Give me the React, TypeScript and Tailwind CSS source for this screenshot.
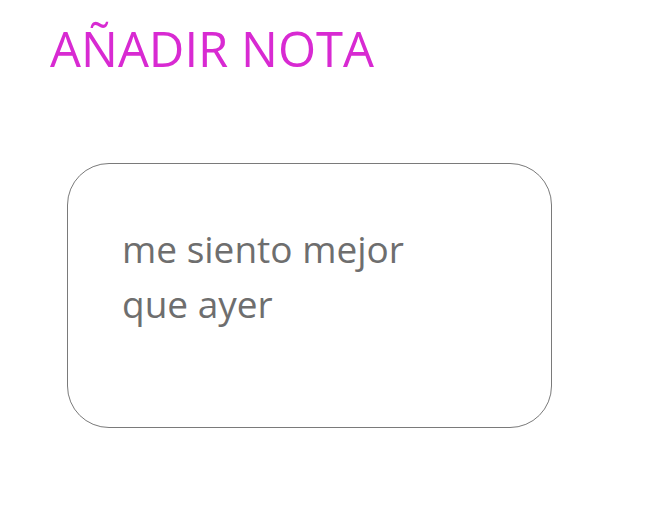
export default function App() {
  return (
    <div className="min-h-screen bg-white font-['Open_Sans',sans-serif]">
      <h1 className="pl-[50px] pt-[16px] text-[49px] leading-[64px] font-normal text-[#d82ad2]">
        AÑADIR NOTA
      </h1>
      <div className="ml-[67px] mt-[83px] h-[265px] w-[485px] rounded-[42px] border border-[#7a7a7a] pl-[54px] pt-[57px]">
        <p className="w-[320px] text-[37px] leading-[55px] text-[#6e6e6e]">
          me siento mejor que ayer
        </p>
      </div>
    </div>
  );
}
